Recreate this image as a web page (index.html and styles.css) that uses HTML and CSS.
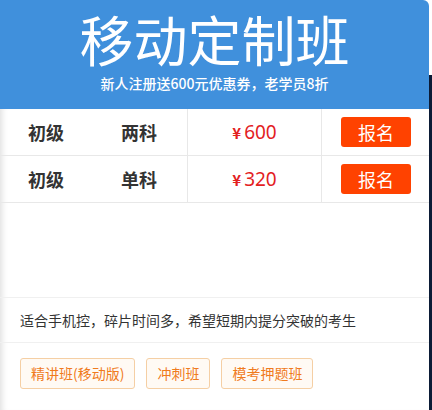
FILE: index.html
```html
<!DOCTYPE html>
<html lang="zh-CN">
<head>
<meta charset="utf-8">
<title>移动定制班</title>
<link rel="stylesheet" href="styles.css">
</head>
<body>
<div class="page">
  <div class="card">
    <header class="hero">
      <h1 class="hero-title">移动定制班</h1>
      <p class="hero-sub">新人注册送600元优惠券，老学员8折</p>
    </header>
    <div class="content">
      <div class="row">
        <div class="cell-name"><span class="level">初级</span><span class="subject">两科</span></div>
        <div class="cell-price"><span class="yen">¥</span>600</div>
        <div class="cell-btn"><button class="btn">报名</button></div>
      </div>
      <div class="row">
        <div class="cell-name"><span class="level">初级</span><span class="subject">单科</span></div>
        <div class="cell-price"><span class="yen">¥</span>320</div>
        <div class="cell-btn"><button class="btn">报名</button></div>
      </div>
      <div class="spacer"></div>
      <p class="desc">适合手机控，碎片时间多，希望短期内提分突破的考生</p>
      <div class="tags">
        <span class="tag">精讲班(移动版)</span>
        <span class="tag">冲刺班</span>
        <span class="tag">模考押题班</span>
      </div>
    </div>
  </div>
  <div class="side">
    <div class="side-top"></div>
    <div class="side-dark"></div>
  </div>
</div>
</body>
</html>
```
FILE: styles.css
```css
* { box-sizing: border-box; }
html, body { margin: 0; padding: 0; background: #fff; }
body {
  font-family: "Noto Sans CJK SC", "Noto Sans", "Liberation Sans", sans-serif;
  width: 432px;
  height: 410px;
  overflow: hidden;
}
.page {
  display: flex;
  height: 410px;
}
.card {
  width: 429px;
  flex: none;
  display: flex;
  flex-direction: column;
}
.hero {
  background: #4090dc;
  height: 109px;
  border-top-right-radius: 6px;
  color: #fff;
  text-align: center;
  padding-top: 8px;
}
.hero-title {
  margin: 0;
  font-size: 54px;
  font-weight: 400;
  line-height: 62px;
}
.hero-sub {
  margin: 3px 0 0;
  font-size: 14px;
  line-height: 20px;
  font-weight: 500;
}
.content {
  flex: 1;
  background: #fff;
  box-shadow: inset 7px 0 6px -5px rgba(0,0,0,0.13);
}
.row {
  display: flex;
  height: 47px;
  border-bottom: 1px solid #e8e8e8;
  align-items: stretch;
}
.cell-name {
  width: 188px;
  display: flex;
  align-items: center;
  border-right: 1px solid #e8e8e8;
  font-weight: 700;
  font-size: 18px;
  color: #333;
}
.level { margin-left: 28px; width: 93px; }
.cell-price {
  width: 134px;
  display: flex;
  align-items: center;
  justify-content: center;
  border-right: 1px solid #e8e8e8;
  color: #e3211f;
  font-size: 19px;
  font-family: "Noto Sans", "Liberation Sans", sans-serif;
}
.yen {
  font-size: 15px;
  font-weight: 700;
  margin-right: 3px;
  font-family: "Noto Sans CJK SC", sans-serif;
}
.cell-btn {
  flex: 1;
  display: flex;
  align-items: center;
  padding-left: 19px;
}
.btn {
  width: 70px;
  height: 30px;
  border: 0;
  border-radius: 3px;
  background: #ff4200;
  color: #fff;
  font-family: "Noto Sans CJK SC", sans-serif;
  font-size: 18px;
  line-height: 30px;
  padding: 0;
}
.spacer {
  height: 95px;
  border-bottom: 1px solid #f0f0f0;
}
.desc {
  margin: 0;
  height: 45px;
  line-height: 44px;
  padding-left: 20px;
  font-size: 14px;
  color: #333;
  border-bottom: 1px solid #f0f0f0;
}
.tags {
  display: flex;
  gap: 11px;
  padding: 15px 0 0 20px;
}
.tag {
  display: inline-block;
  height: 31px;
  line-height: 29px;
  padding: 0 10px;
  border: 1px solid #f5cfa4;
  border-radius: 3px;
  background: #fffaf4;
  color: #f07b1d;
  font-size: 14px;
}
.side {
  flex: 1;
  display: flex;
  flex-direction: column;
}
.side-top { height: 75px; background: #fff; }
.side-dark { flex: 1; background: #0b1b36; }
```
